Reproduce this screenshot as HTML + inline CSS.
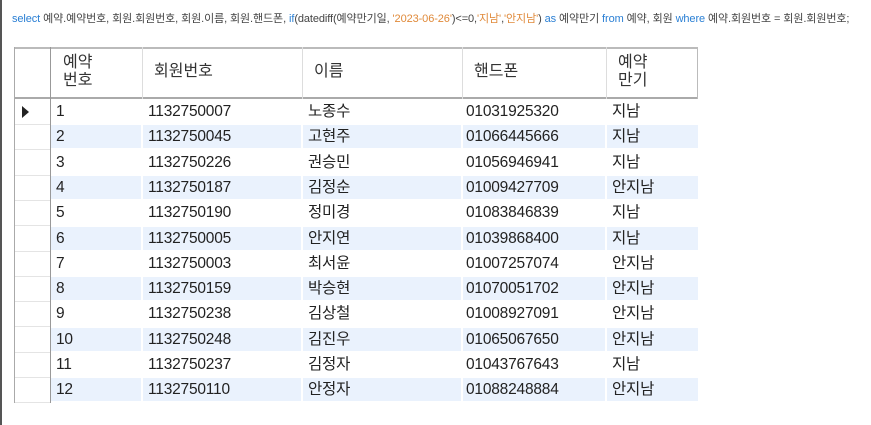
<!DOCTYPE html><html><head><meta charset="utf-8"><style>
body{margin:0;width:871px;height:425px;background:#fff;position:relative;overflow:hidden;font-family:"Liberation Sans","Noto Sans CJK KR",sans-serif;}
.lb{position:absolute;left:0;top:0;width:2px;height:425px;background:#555}
.sql{position:absolute;left:12px;top:10px;font-size:11px;white-space:nowrap;color:#444;font-family:"Liberation Sans Narrow","Liberation Sans","Noto Sans CJK KR",sans-serif;letter-spacing:-0.1px}
.k{color:#2a7fd4}.s{color:#e08a3a}
.c{position:absolute;font-size:15.5px;color:#222;line-height:25px;white-space:nowrap;letter-spacing:-0.2px}
.h{position:absolute;font-size:16px;color:#333;line-height:18px}
.alt{position:absolute;height:23px;background:#eaf2fd}
.vl{position:absolute;width:1px;background:#ddd}
.hl{position:absolute;height:1px;background:#e4e4e4}
</style></head><body>
<div class="lb"></div>
<div class="sql"><span class="k">select</span> 예약.예약번호, 회원.회원번호, 회원.이름, 회원.핸드폰, <span class="k">if</span>(datediff(예약만기일, <span class="s">'2023-06-26'</span>)&lt;=0,<span class="s">'지남'</span>,<span class="s">'안지남'</span>) <span class="k">as</span> 예약만기 <span class="k">from</span> 예약, 회원 <span class="k">where</span> 예약.회원번호 = 회원.회원번호;</div>
<div style="position:absolute;left:14px;top:47px;width:684px;height:2px;background:#bbb"></div>
<div style="position:absolute;left:14px;top:97px;width:684px;height:2px;background:#aaa"></div>
<div class="vl" style="left:14px;top:47px;height:356px;background:#aaa"></div>
<div class="vl" style="left:50px;top:47px;height:356px;background:#999"></div>
<div class="vl" style="left:142px;top:47px;height:52px"></div>
<div class="vl" style="left:302px;top:47px;height:52px"></div>
<div class="vl" style="left:462px;top:47px;height:52px"></div>
<div class="vl" style="left:606px;top:47px;height:52px"></div>
<div class="vl" style="left:697px;top:47px;height:52px;background:#bbb"></div>
<div class="h" style="left:63px;top:54px">예약<br>번호</div>
<div class="h" style="left:154px;top:63px">회원번호</div>
<div class="h" style="left:314px;top:63px">이름</div>
<div class="h" style="left:474px;top:63px">핸드폰</div>
<div class="h" style="left:618px;top:54px">예약<br>만기</div>
<div style="position:absolute;left:22px;top:106px;width:0;height:0;border-top:6px solid transparent;border-bottom:6px solid transparent;border-left:7px solid #222"></div>
<div id="rows"></div>
<script>
var d=[["1","1132750007","노종수","01031925320","지남"],["2","1132750045","고현주","01066445666","지남"],["3","1132750226","권승민","01056946941","지남"],["4","1132750187","김정순","01009427709","안지남"],["5","1132750190","정미경","01083846839","지남"],["6","1132750005","안지연","01039868400","지남"],["7","1132750003","최서윤","01007257074","안지남"],["8","1132750159","박승현","01070051702","안지남"],["9","1132750238","김상철","01008927091","안지남"],["10","1132750248","김진우","01065067650","안지남"],["11","1132750237","김정자","01043767643","지남"],["12","1132750110","안정자","01088248884","안지남"]];
var xs=[56,148,308,466,612],cl=[[51,141],[143,301],[303,461],[463,605],[607,698]],h="";
for(var i=0;i<12;i++){var y=99+i*25.3;
if(i%2==1)for(var j=0;j<5;j++)h+='<div class="alt" style="left:'+cl[j][0]+'px;top:'+(y+1)+'px;width:'+(cl[j][1]-cl[j][0])+'px"></div>';
h+='<div class="hl" style="left:15px;top:'+(y+25)+'px;width:35px"></div>';
for(var j=0;j<5;j++)h+='<div class="c" style="left:'+xs[j]+'px;top:'+y+'px">'+d[i][j]+'</div>';}
document.getElementById("rows").innerHTML=h;
</script>
</body></html>
